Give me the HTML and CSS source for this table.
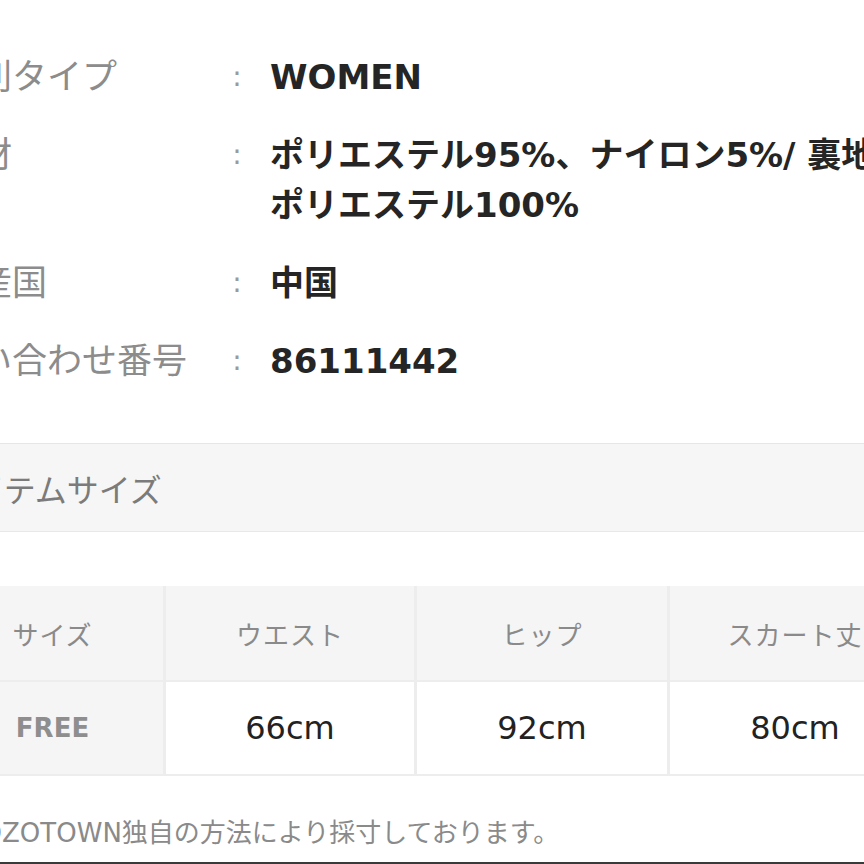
FILE: index.html
```html
<!DOCTYPE html>
<html lang="ja">
<head>
<meta charset="utf-8">
<title>アイテム詳細</title>
<link rel="stylesheet" href="styles.css">
</head>
<body>
<div class="page">
  <dl class="spec">
    <div class="spec-row">
      <dt class="spec-label">性別タイプ</dt>
      <dd class="spec-colon">:</dd>
      <dd class="spec-value">WOMEN</dd>
    </div>
    <div class="spec-row">
      <dt class="spec-label">素材</dt>
      <dd class="spec-colon">:</dd>
      <dd class="spec-value"><span class="line">ポリエステル95%、ナイロン5%/ 裏地：</span><span class="line">ポリエステル100%</span></dd>
    </div>
    <div class="spec-row">
      <dt class="spec-label">原産国</dt>
      <dd class="spec-colon">:</dd>
      <dd class="spec-value">中国</dd>
    </div>
    <div class="spec-row">
      <dt class="spec-label">問い合わせ番号</dt>
      <dd class="spec-colon">:</dd>
      <dd class="spec-value">86111442</dd>
    </div>
  </dl>

  <h2 class="section-title">アイテムサイズ</h2>

  <div class="size-table">
    <div class="cell head first">サイズ</div>
    <div class="cell head">ウエスト</div>
    <div class="cell head">ヒップ</div>
    <div class="cell head">スカート丈</div>
    <div class="cell size-name">FREE</div>
    <div class="cell val">66cm</div>
    <div class="cell val">92cm</div>
    <div class="cell val">80cm</div>
  </div>

  <p class="note">※ZOZOTOWN独自の方法により採寸しております。</p>
</div>
<div class="bottom-bar"></div>
</body>
</html>
```

FILE: styles.css
```css
html, body {
  margin: 0;
  padding: 0;
  background: #ffffff;
  overflow: hidden;
  height: 864px;
}

body {
  font-family: "DejaVu Sans", "Noto Sans CJK JP", sans-serif;
  color: #222222;
  display: flex;
  flex-direction: column;
}

.page {
  margin-left: -58px;
  width: 1000px;
  flex: 1;
}

.spec {
  margin: 0;
  padding-top: 52px;
  display: flex;
  flex-direction: column;
  gap: 28px;
}

.spec-row {
  display: grid;
  grid-template-columns: 288px 40px 1fr;
  align-items: start;
}

.spec-label,
.spec-colon,
.spec-value {
  margin: 0;
  line-height: 50px;
}

.spec-label {
  font-size: 35px;
  color: #8c8c8c;
  font-weight: 400;
  white-space: nowrap;
}

.spec-colon {
  width: 14px;
  text-align: center;
  font-size: 28px;
  color: #9a9a9a;
}

.spec-value {
  font-size: 34px;
  font-weight: 700;
  color: #252525;
  white-space: nowrap;
}

.spec-value .line {
  display: block;
}

.section-title {
  margin: 57px 0 0;
  height: 87px;
  display: flex;
  align-items: center;
  background: #f6f6f6;
  border-top: 1px solid #e6e6e6;
  border-bottom: 1px solid #e8e8e8;
  font-size: 32px;
  font-weight: 400;
  color: #7b7b7b;
}

.size-table {
  margin-top: 54px;
  display: grid;
  grid-template-columns: 221px 248px 250px 250px;
  grid-template-rows: 94px 92px;
  column-gap: 3px;
  row-gap: 2px;
  background: #ededed;
  padding-bottom: 2px;
}

.cell {
  display: flex;
  align-items: center;
  justify-content: center;
}

.cell.head {
  background: #f5f5f5;
  font-size: 26px;
  color: #8a8a8a;
  letter-spacing: 1px;
}

.cell.size-name {
  background: #f5f5f5;
  font-size: 26px;
  font-weight: 700;
  color: #8e8e8e;
}

.cell.val {
  background: #ffffff;
  font-size: 32px;
  color: #222222;
}

.note {
  margin: 39px 0 0;
  font-size: 26px;
  line-height: 36px;
  color: #8a8a8a;
  white-space: nowrap;
}

.bottom-bar {
  height: 2px;
  background: #3a3a3a;
  flex: none;
}
```
